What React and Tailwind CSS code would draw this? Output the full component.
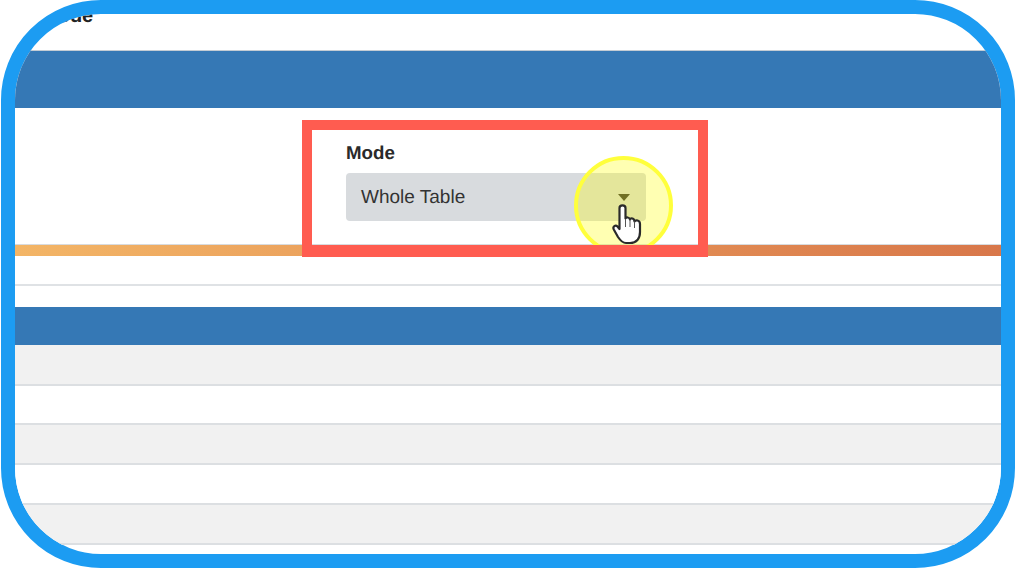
const rows = [
  "bg-[#f1f1f1] h-[41px]",
  "bg-white h-[39px]",
  "bg-[#f1f1f1] h-[40px]",
  "bg-white h-[40px]",
  "bg-[#f1f1f1] h-[40px]",
];

function HandCursor() {
  return (
    <svg width="30" height="41" viewBox="0 0 30 41" className="absolute left-[612px] top-[204px] blur-[0.4px]">
      <path
        d="M7.5 4C7.5 0.5 13.5 0.5 13.5 4V14.5C14 13 17.5 13 18 15.5C18.5 13.5 22.5 14 22.5 17.5C23.5 15.5 28 16 28 20V28C28 34.5 24.5 39 18 39H14C10 39 8 36 6 33L1.8 25.5C0.3 22.5 3.5 20.5 5.5 22.5L7.5 25Z"
        fill="#fff"
        stroke="#2a2a2a"
        strokeWidth="2.2"
        strokeLinejoin="round"
      />
      <path d="M13.5 15V23M18 15.5V23M22.5 17.5V24" fill="none" stroke="#555" strokeWidth="1" />
    </svg>
  );
}

export default function App() {
  return (
    <div className="relative w-[1015px] h-[569px] bg-white overflow-hidden font-['Liberation_Sans',sans-serif] [text-rendering:geometricPrecision]">
      <div className="ml-[1px] w-[1014px] h-[568px] border-[14px] border-[#1c9cf2] rounded-[100px] overflow-hidden bg-white">
        <div className="h-[36px] pl-[26px] flex items-start">
          <div className="-mt-[8px] text-[20px] leading-[20px] font-bold text-[#222]">Mode</div>
        </div>
        <div className="h-[58px] bg-[#3578b5] border-t border-[#c4ccd4]" />
        <div className="h-[136px] pl-[331px] pt-[34px]">
          <label className="block text-[18.7px] leading-[22px] font-bold text-[#2a2a2a]">Mode</label>
          <div className="mt-[9px] w-[300px] h-[48px] pl-[15px] pr-[16px] flex items-center justify-between bg-[#d8dbde] rounded-[4px]">
            <span className="pt-[2px] text-[19px] text-[#333]">Whole Table</span>
            <span className="w-0 h-0 border-x-[6px] border-x-transparent border-t-[7px] border-t-[#333]" />
          </div>
        </div>
        <div className="h-[12px] bg-gradient-to-r from-[#f3b566] to-[#d8774a] border-t border-[#d8dbde]" />
        <div className="h-[30px] border-b-2 border-[#dfe2e5]" />
        <div className="h-[21px]" />
        <div className="h-[38px] bg-[#3578b5]" />
        {rows.map((row, i) => (
          <div key={i} className={`${row} border-b-2 border-[#dcdfe2]`} />
        ))}
      </div>

      {/* yellow click marker, red highlight and cursor sit over the page */}
      <div className="absolute left-[574px] top-[156px] w-[99px] h-[99px] rounded-full border-4 border-[#ffff3c] bg-[#ffff00]/30" />
      <div className="absolute left-[302px] top-[120px] w-[406px] h-[137px] border-x-[10px] border-t-[10px] border-b-[12px] border-[#ff5c50]" />
      <HandCursor />
    </div>
  );
}
